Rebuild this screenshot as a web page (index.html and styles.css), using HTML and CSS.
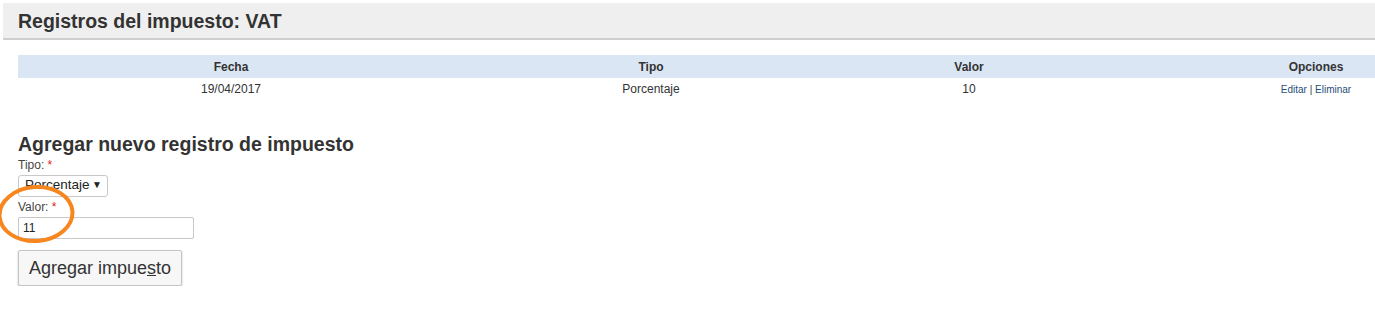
FILE: index.html
```html
<!DOCTYPE html>
<html lang="es">
<head>
  <meta charset="UTF-8">
  <title>Registros del impuesto: VAT</title>
  <link rel="stylesheet" href="styles.css">
</head>
<body>
  <div class="page-header">
    <h1>Registros del impuesto: VAT</h1>
  </div>
  <div class="content">
    <table class="records">
      <thead>
        <tr>
          <th class="col-date">Fecha</th>
          <th class="col-type">Tipo</th>
          <th class="col-value">Valor</th>
          <th class="col-opts">Opciones</th>
        </tr>
      </thead>
      <tbody>
        <tr>
          <td>19/04/2017</td>
          <td>Porcentaje</td>
          <td>10</td>
          <td class="col-opts opts"><a href="#">Editar</a> | <a href="#">Eliminar</a></td>
        </tr>
      </tbody>
    </table>

    <form class="add-form">
      <h2>Agregar nuevo registro de impuesto</h2>
      <label class="field-label">Tipo: <span class="req">*</span></label>
      <div class="fake-select">
        <span class="fake-select-text">Porcentaje</span>
        <span class="fake-select-arrow">&#9660;</span>
      </div>
      <div class="highlight">
        <label class="field-label">Valor: <span class="req">*</span></label>
        <input class="text-input" type="text" value="11">
        <svg class="circle-mark" width="82" height="62" viewBox="0 0 82 62">
          <ellipse cx="39" cy="30" rx="36.5" ry="27" transform="rotate(-4 39 30)" fill="none" stroke="#f7861f" stroke-width="4"/>
        </svg>
      </div>
      <button type="button" class="submit-btn">Agregar impue<u>s</u>to</button>
    </form>
  </div>
</body>
</html>
```

FILE: styles.css
```css
/* Base */
* { box-sizing: border-box; }
body {
  margin: 0;
  padding: 3px 0 0 3px;
  font-family: "Liberation Sans", Arial, sans-serif;
  color: #333;
  background: #fff;
}

/* Header */
.page-header {
  background: #efefef;
  border-bottom: 2px solid #cfcfcf;
  height: 37px;
  padding: 2px 15px 0;
  display: flex;
  align-items: center;
}
.page-header h1 {
  margin: 0;
  font-size: 19.5px;
  font-weight: bold;
  color: #333;
}

.content { padding: 15px 0 0 15px; }

/* Table */
.records {
  width: 1357px;
  border-collapse: collapse;
  font-size: 12px;
  table-layout: fixed;
}
.records th {
  background: #dae6f4;
  height: 23px;
  font-weight: bold;
  color: #333;
  padding: 0;
}
.records td {
  height: 22px;
  text-align: center;
  padding: 0;
  color: #333;
}
.col-date { width: 426px; }
.col-type { width: 414px; }
.col-value { width: 222px; }
.records .col-opts { padding-left: 177px; }
.opts { font-size: 10px; }
.opts a { color: #1f4e79; text-decoration: none; }

/* Form */
.add-form { margin-top: 33px; }
.add-form h2 {
  margin: 0 0 3px;
  font-size: 19.5px;
  font-weight: bold;
  color: #333;
  line-height: 22px;
}
.field-label {
  display: block;
  font-size: 12px;
  color: #444;
  line-height: 14px;
}
.req { color: #e02020; }

.fake-select {
  width: 90px;
  height: 22px;
  margin-top: 3px;
  border: 1px solid #c8c8c8;
  border-radius: 3px;
  display: flex;
  align-items: flex-start;
  justify-content: space-between;
  padding: 0 5px 0 6px;
  font-size: 13.5px;
  color: #222;
}
.fake-select-text { line-height: 16px; margin-top: 1px; }
.fake-select-arrow { font-size: 10px; line-height: 18px; }

.highlight { position: relative; margin-top: 3px; }
.text-input {
  display: block;
  width: 176px;
  height: 22px;
  margin-top: 3px;
  border: 1px solid #c8c8c8;
  border-radius: 2px;
  padding: 0 4px;
  font-size: 12px;
  font-family: inherit;
  color: #222;
}
.circle-mark {
  position: absolute;
  left: -21px;
  top: -16px;
  pointer-events: none;
}

.submit-btn {
  margin-top: 11px;
  width: 164px;
  height: 36px;
  background: #f7f7f7;
  border: 1px solid #c4c4c4;
  border-radius: 2px;
  box-shadow: 0 1px 2px rgba(0,0,0,0.25);
  font-family: inherit;
  font-size: 18px;
  color: #333;
  padding: 0;
}
```
